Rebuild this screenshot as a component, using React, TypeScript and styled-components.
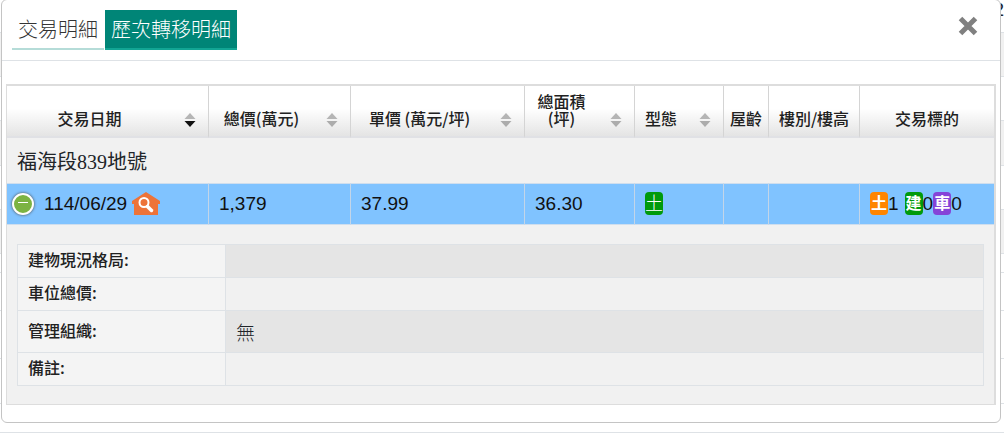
import React from 'react';
import styled, { createGlobalStyle } from 'styled-components';

const GlobalStyle = createGlobalStyle`
  *, *::before, *::after { box-sizing: border-box; }
  body {
    margin: 0;
    background: #fff;
    color: #212529;
    font-family: "Liberation Sans", "Noto Sans CJK TC", sans-serif;
  }
`;

const Page = styled.div`
  position: relative;
  overflow: hidden;
`;

const BackRow = styled.div<{ $height: number; $striped?: boolean }>`
  display: flex;
  justify-content: flex-end;
  align-items: center;
  height: ${(p) => p.$height}px;
  border-bottom: 1px solid #dee2e6;
  background: ${(p) => (p.$striped ? '#f1f1f1' : '#fff')};
`;

const BackMark = styled.span`
  width: 1px;
  height: 14px;
  margin-right: 3px;
  background: #8fcbc5;
`;

const BackText = styled.span`
  margin-bottom: 12px;
  font-size: 19px;
  line-height: 24px;
`;

const Modal = styled.section`
  position: absolute;
  top: -1px;
  left: 1px;
  right: 3px;
  border: 1px solid #c4c4c4;
  border-radius: 6px;
  background: #fff;
`;

const ModalHeader = styled.header`
  display: flex;
  justify-content: space-between;
  align-items: flex-start;
  height: 61px;
  padding: 10px 20px 0 10px;
  border-bottom: 1px solid #dee2e6;
`;

const Tabs = styled.nav`
  display: flex;
  gap: 1px;
`;

const Tab = styled.button<{ $active?: boolean }>`
  height: 40px;
  padding: 0 6px;
  border: 0;
  border-bottom: 2px solid ${(p) => (p.$active ? '#12a594' : '#b5dcd8')};
  background: ${(p) => (p.$active ? '#008577' : '#fff')};
  color: ${(p) => (p.$active ? '#fff' : '#333')};
  font-family: "Noto Sans CJK TC", sans-serif;
  font-size: 20px;
  font-weight: 300;
  line-height: 38px;
`;

const CloseButton = styled.button`
  display: flex;
  margin-top: 4px;
  padding: 0;
  border: 0;
  background: none;
`;

const ModalBody = styled.div`
  padding: 23px 4px 17px;
`;

const TableFrame = styled.div`
  border: 1px solid #ddd;
  border-top-width: 2px;
  border-right-width: 2px;
  background: #f1f1f1;
`;

const Table = styled.table`
  width: 100%;
  border-collapse: separate;
  border-spacing: 0;
  table-layout: fixed;
`;

const HeadCell = styled.th<{ $sortable?: boolean }>`
  position: relative;
  height: 52px;
  padding: ${(p) => (p.$sortable ? '0 43px 9px 7px' : '0 4px 9px')};
  border-right: 1px solid #d4d4d4;
  border-bottom: 2px solid #e0e1e5;
  background: linear-gradient(#fff 45%, #e4e4e4);
  color: #212121;
  font-family: "Noto Sans CJK TC", sans-serif;
  font-size: 16px;
  font-weight: 500;
  line-height: 17px;
  text-align: center;
  vertical-align: bottom;
  &:last-child { border-right: 0; }
`;

const SortMark = styled.svg`
  position: absolute;
  right: 12px;
  bottom: 9px;
`;

const GroupCell = styled.td`
  height: 45px;
  padding: 2px 10px 0;
  font-family: "Liberation Serif", "Noto Sans CJK TC", serif;
  font-size: 20px;
  font-weight: 400;
  line-height: 24px;
`;

const Cell = styled.td`
  height: 42px;
  padding: 0 10px 1px;
  border-top: 1px solid #cfdeee;
  border-right: 1px solid #c3d5e8;
  border-bottom: 1px solid #cfdeee;
  background: #80c3ff;
  color: #111;
  font-size: 19px;
  line-height: 24px;
  white-space: nowrap;
  &:first-child { padding-left: 5px; }
  &:last-child { border-right: 0; }
`;

const DateGroup = styled.div`
  display: flex;
  align-items: center;
  gap: 5px;
`;

const Toggle = styled.button`
  display: flex;
  justify-content: center;
  align-items: center;
  width: 22px;
  height: 22px;
  margin-right: 5px;
  padding: 0 0 3px;
  border: 2px solid #fff;
  border-radius: 50%;
  background: #7cb342;
  box-shadow: 0 0 3px #444;
`;

const Badge = styled.span<{ $color: string; $bold?: boolean }>`
  display: inline-flex;
  justify-content: center;
  width: 18px;
  height: 23px;
  border-radius: 4px;
  background: ${(p) => p.$color};
  color: #fff;
  font-family: "Noto Sans CJK TC", sans-serif;
  font-size: ${(p) => (p.$bold ? 16 : 18)}px;
  font-weight: ${(p) => (p.$bold ? 700 : 300)};
  line-height: 20px;
`;

const Targets = styled.div`
  display: flex;
  align-items: center;
  height: 24px;
`;

const Count = styled.span<{ $spaced?: boolean }>`
  margin-right: ${(p) => (p.$spaced ? 6 : 0)}px;
`;

const TypeLine = styled.div`
  display: flex;
  align-items: center;
`;

const DetailCell = styled.td`
  padding: 19px 10px 18px;
`;

const DetailTable = styled.table`
  width: 100%;
  border-collapse: collapse;
  table-layout: fixed;
`;

const DetailLabel = styled.th`
  width: 208px;
  height: 33px;
  padding: 0 10px 4px;
  border: 1px solid #dee2e6;
  background: #f4f4f4;
  color: #212121;
  font-family: "Noto Sans CJK TC", sans-serif;
  font-size: 16px;
  font-weight: 500;
  line-height: 24px;
  text-align: left;
`;

const DetailValue = styled.td<{ $striped?: boolean }>`
  padding: 0 10px;
  border: 1px solid #dee2e6;
  background: ${(p) => (p.$striped ? '#e5e5e5' : '#f1f1f1')};
  font-family: "Noto Sans CJK TC", sans-serif;
  font-size: 19px;
  font-weight: 300;
  line-height: 41px;
`;

const SortIcon = ({ active }: { active?: boolean }) => (
  <SortMark width="12" height="14" viewBox="0 0 12 14" aria-hidden="true">
    <path d="M6 0 11.500 6H.5z" fill="#b5b5b5" />
    <path d="M.5 8h11L6 14z" fill={active ? '#111' : '#acacac'} />
  </SortMark>
);

const HouseIcon = () => (
  <svg width="28" height="24" viewBox="0 0 28 24" aria-hidden="true">
    <path d="M14 0 28 9v3h-2v11H2V12H0V9z" fill="#ed7338" />
    <circle cx="12" cy="10.500" r="4.500" fill="none" stroke="#fff" strokeWidth="2" />
    <path d="m15.500 14.500 4 4" stroke="#fff" strokeWidth="3.500" strokeLinecap="round" />
  </svg>
);

const columns = [
  { label: '交易日期', width: 202, sortable: true, active: true },
  { label: '總價(萬元)', width: 142, sortable: true },
  { label: '單價 (萬元/坪)', width: 174, sortable: true },
  { label: '總面積(坪)', width: 110, sortable: true },
  { label: '型態', width: 89, sortable: true },
  { label: '屋齡', width: 45 },
  { label: '樓別/樓高', width: 91 },
  { label: '交易標的' },
];

const details = [
  { label: '建物現況格局:', value: '' },
  { label: '車位總價:', value: '' },
  { label: '管理組織:', value: '無' },
  { label: '備註:', value: '' },
];

const backRows = [
  { height: 33, text: '2' },
  { height: 44, striped: true, mark: true },
  { height: 44, mark: true },
  { height: 45, striped: true, mark: true },
  { height: 44, mark: true },
  { height: 44, striped: true, mark: true },
  { height: 19 },
  { height: 38 },
  { height: 48 },
  { height: 45 },
  { height: 29 },
];

export default function App() {
  return (
    <Page>
      <GlobalStyle />
      {backRows.map((row, i) => (
        <BackRow key={i} $height={row.height} $striped={row.striped}>
          {row.text && <BackText>{row.text}</BackText>}
          {row.mark && <BackMark />}
        </BackRow>
      ))}
      <Modal role="dialog" aria-label="歷次轉移明細">
        <ModalHeader>
          <Tabs>
            <Tab type="button">交易明細</Tab>
            <Tab type="button" $active>歷次轉移明細</Tab>
          </Tabs>
          <CloseButton type="button" aria-label="關閉">
            <svg width="24" height="24" viewBox="0 0 24 24" aria-hidden="true">
              <path d="m4.500 4.500 15 15m0-15-15 15" stroke="#808080" strokeWidth="5" />
            </svg>
          </CloseButton>
        </ModalHeader>
        <ModalBody>
          <TableFrame>
            <Table>
              <colgroup>
                {columns.map((c) => <col key={c.label} width={c.width} />)}
              </colgroup>
              <thead>
                <tr>
                  {columns.map((c) => (
                    <HeadCell key={c.label} scope="col" $sortable={c.sortable}>
                      {c.label}
                      {c.sortable && <SortIcon active={c.active} />}
                    </HeadCell>
                  ))}
                </tr>
              </thead>
              <tbody>
                <tr><GroupCell colSpan={8}>福海段839地號</GroupCell></tr>
                <tr>
                  <Cell>
                    <DateGroup>
                      <Toggle type="button" aria-label="收合">
                        <svg width="10" height="1" aria-hidden="true"><path d="M0 0h10v1H0z" fill="#fff" /></svg>
                      </Toggle>
                      114/06/29
                      <HouseIcon />
                    </DateGroup>
                  </Cell>
                  <Cell>1,379</Cell>
                  <Cell>37.99</Cell>
                  <Cell>36.30</Cell>
                  <Cell><TypeLine><Badge $color="#009a0c">土</Badge></TypeLine></Cell>
                  <Cell />
                  <Cell />
                  <Cell>
                    <Targets>
                      <Badge $color="#ff8500" $bold>土</Badge><Count $spaced>1</Count>
                      <Badge $color="#009a0c" $bold>建</Badge><Count>0</Count>
                      <Badge $color="#8544d8" $bold>車</Badge><Count>0</Count>
                    </Targets>
                  </Cell>
                </tr>
                <tr>
                  <DetailCell colSpan={8}>
                    <DetailTable>
                      <tbody>
                        {details.map((d, i) => (
                          <tr key={d.label}>
                            <DetailLabel scope="row">{d.label}</DetailLabel>
                            <DetailValue $striped={i % 2 === 0}>{d.value}</DetailValue>
                          </tr>
                        ))}
                      </tbody>
                    </DetailTable>
                  </DetailCell>
                </tr>
              </tbody>
            </Table>
          </TableFrame>
        </ModalBody>
      </Modal>
    </Page>
  );
}
